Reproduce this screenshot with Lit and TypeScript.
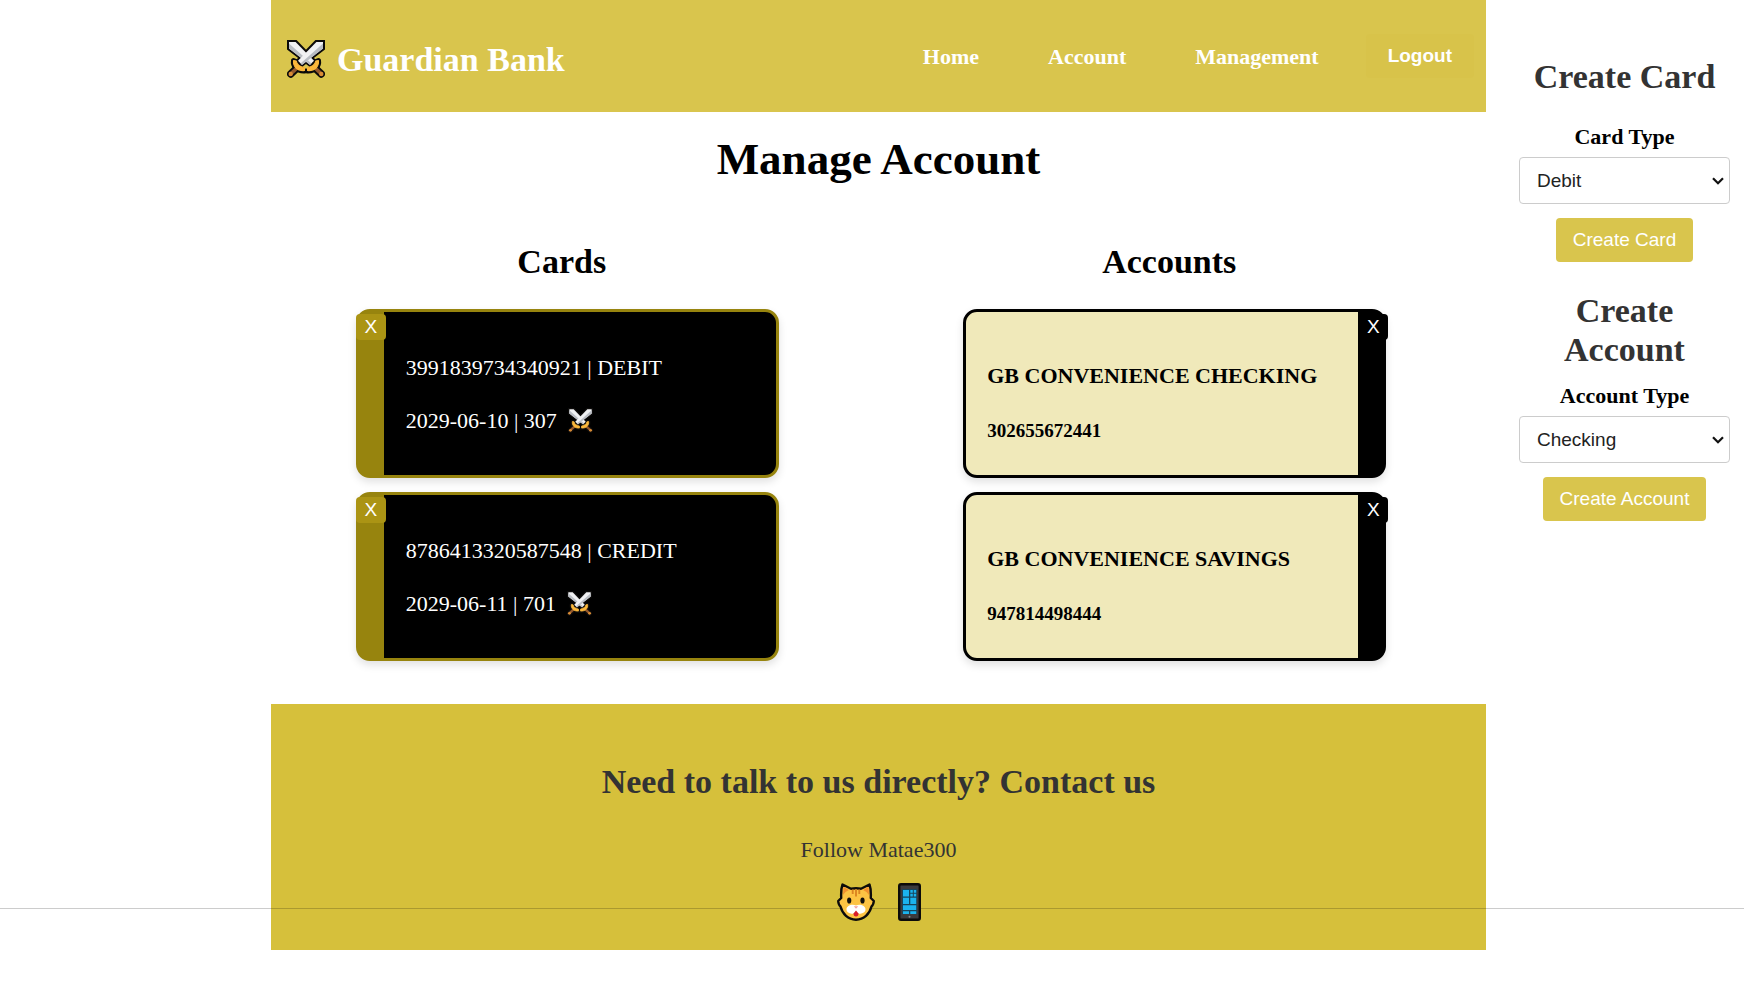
import { LitElement, html, css, svg } from "lit";
import { customElement, state } from "lit/decorators.js";

interface Card {
  number: string;
  type: string;
  expires: string;
  code: string;
}

interface Account {
  name: string;
  number: string;
}

const outline = svg`
  <path d="M1.400 1.400H9L27.500 20.500L22.800 25.200L1.400 8.800Z" fill="#0c0b0a" stroke="#0c0b0a" stroke-width="2.800" stroke-linejoin="miter"/>
  <path d="M28 28L34.300 34" stroke="#0c0b0a" stroke-width="7.400" stroke-linecap="round"/>
  <path d="M31.500 20.500C32.500 26 28 31.500 20.300 31C23 29 28 26 29 21.500Z" fill="#0c0b0a" stroke="#0c0b0a" stroke-width="5" stroke-linejoin="round"/>
`;

const blade = svg`
  <path d="M2 2H8.600L27 20.800L23 24.800L2 8.400Z" fill="#f0f1f3"/>
  <path d="M2 3.400L24.500 23.500L23 25L2 8.400Z" fill="#b9bdc3"/>
`;

const hilt = svg`
  <path d="M27.500 27.500L34 33.600" stroke="#94592c" stroke-width="3.600"/>
  <circle cx="34.300" cy="34" r="2.200" fill="#d98b35"/>
  <path d="M31.300 20.500C32.500 26 28 31 20.600 30.500V27.500C24.500 27 28 25 28.800 21Z" fill="#fbb83c" stroke="#fbb83c" stroke-width="1.200" stroke-linejoin="round"/>
`;

const mirrored = (part: unknown) => svg`
  <g transform="translate(38 0) scale(-1 1)">${part}</g>
  <g>${part}</g>
`;

const swords = (cls: string) => html`
  <svg class=${cls} viewBox="0 0 38 38" role="img" aria-label="Crossed swords">
    ${mirrored(outline)}
    <g>${blade}</g>
    <g transform="translate(38 0) scale(-1 1)">${blade}</g>
    ${mirrored(hilt)}
  </svg>
`;

const cat = html`
  <svg class="social-icon" viewBox="0 0 38 38" aria-hidden="true">
    <path d="M5.500 1.500L14 5.800Q19 4.800 24 5.800L32.500 1.500Q34.200 6 33.800 15L36.800 18Q36.500 22 34.500 23.500C32.500 31 27 36.700 19 36.700S5.500 31 3.500 23.500Q1.500 22 1.200 18L4.200 15Q3.800 6 5.500 1.500Z" fill="#fdc343" stroke="#0c0b0a" stroke-width="2.400" stroke-linejoin="round"/>
    <path d="M6.500 3.800L12 7Q8 8.500 6 12Z M31.500 3.800L26 7Q30 8.500 32 12Z" fill="#f2902f"/>
    <path d="M15.700 6.500V11 M19 6.300V13.500 M22.300 6.500V11" stroke="#dc8420" stroke-width="1.900" fill="none"/>
    <ellipse cx="12.200" cy="17.500" rx="2.100" ry="3.100" fill="#14100c"/>
    <ellipse cx="25.500" cy="17.500" rx="2.100" ry="3.100" fill="#14100c"/>
    <path d="M19 22.500C23 20.800 28.500 22.500 28.500 26.500C28.500 30 24 31 21.500 30.800H16.500C14 31 9.500 30 9.500 26.500C9.500 22.500 15 20.800 19 22.500Z" fill="#fff"/>
    <path d="M16.800 23.200H21.200L19 25.800Z" fill="#f3a0a0"/>
    <path d="M19 27.500L21.500 30.500Q21.500 33.500 19 33.500T16.500 30.500Z" fill="#d91e2b"/>
  </svg>
`;

const phone = html`
  <svg class="social-icon phone" viewBox="0 0 23 38" aria-hidden="true">
    <rect x="1.200" y="1.200" width="20.600" height="35.600" rx="1.800" fill="#3b3b3d" stroke="#0c0b0a" stroke-width="2.400"/>
    <rect x="4" y="6" width="15" height="25" fill="#17455c"/>
    <path d="M5 7H11V13.500H5Z M12.300 7H14.800V9.700H12.300Z M15.800 7H18.200V9.700H15.800Z M12.300 10.800H14.800V13.500H12.300Z M15.800 10.800H18.200V13.500H15.800Z M5 14.800H11V21H5Z M12.300 14.800H18.200V21H12.300Z M5 22.200H18.200V27H5Z M5 28.200H11V31H5Z M12.300 28.200H18.200V31H12.300Z" fill="#1bb3ee"/>
    <circle cx="11.500" cy="33.800" r="1" fill="#8a8a8c"/>
  </svg>
`;

const chevron = html`
  <svg class="chevron" viewBox="0 0 12 8" aria-hidden="true">
    <path d="M1 1.200L6 6.300L11 1.200" fill="none" stroke="#111" stroke-width="2.200"/>
  </svg>
`;

@customElement("app-root")
export class AppRoot extends LitElement {
  static styles = css`
    :host {
      display: block;
      position: relative;
      min-height: 100vh;
      background: #fff;
      color: #000;
      font-family: "Liberation Serif", "Times New Roman", serif;
      font-size: 22px;
      line-height: 25px;
    }
    h1, h2, h3, p, ul {
      margin: 0;
      padding: 0;
    }
    h1 {
      font-size: 45px;
      line-height: 52px;
    }
    h2 {
      font-size: 34px;
      line-height: 39px;
    }
    button, select {
      font-family: "Liberation Sans", Arial, sans-serif;
      font-size: 19px;
      line-height: 22px;
    }
    button {
      border: none;
      color: #fff;
      cursor: pointer;
    }
    .page {
      display: grid;
      grid-template-columns: minmax(0, 271px) minmax(0, 1fr) 258px;
      align-items: start;
    }
    .content {
      grid-column: 2;
    }
    .header {
      display: flex;
      align-items: center;
      justify-content: space-between;
      min-height: 112px;
      box-sizing: border-box;
      padding: 0 12px 0 16px;
      background: #d9c54d;
      color: #fff;
    }
    .brand {
      display: flex;
      align-items: center;
      gap: 12px;
      padding-top: 6px;
    }
    .brand-icon {
      width: 38px;
      height: 38px;
    }
    .nav {
      display: flex;
      align-items: center;
      gap: 25px;
    }
    .nav-link {
      padding: 0 22px;
      color: #fff;
      font-weight: bold;
      text-decoration: none;
    }
    .logout {
      padding: 11px 22px;
      border-radius: 4px;
      background: #d8c34a;
      font-weight: bold;
    }
    .title {
      margin: 21px 0 57px;
      text-align: center;
    }
    .columns {
      display: grid;
      grid-template-columns: 1fr 1fr;
    }
    .column {
      display: flex;
      flex-direction: column;
      gap: 28px;
      padding-right: 26px;
      text-align: center;
    }
    .list {
      display: flex;
      flex-direction: column;
      align-items: center;
      gap: 14px;
      padding-left: 11px;
      list-style: none;
      text-align: left;
    }
    .item {
      position: relative;
      display: flex;
      flex-direction: column;
      box-sizing: border-box;
      width: 100%;
      max-width: 423px;
      min-height: 169px;
      border: 3px solid;
      border-radius: 14px;
      box-shadow: 0 4px 8px rgba(0, 0, 0, 0.12);
    }
    .card {
      gap: 28px;
      padding: 43px 22px 42px;
      border-color: #97840e;
      border-left-width: 28px;
      background: #000;
      color: #fff;
    }
    .account {
      gap: 32px;
      padding: 51px 21px 32px;
      border-color: #000;
      border-right-width: 28px;
      background: #f0e9ba;
    }
    .account-name {
      font-size: 22px;
      line-height: 25px;
    }
    .account-number {
      font-size: 19px;
      line-height: 22px;
      font-weight: bold;
    }
    .close {
      position: absolute;
      top: 2px;
      width: 30px;
      padding: 2px 0;
      border-radius: 4px;
      text-align: center;
    }
    .card .close {
      left: -28px;
      background: #ab9414;
    }
    .account .close {
      right: -30px;
      background: #000;
    }
    .line {
      display: flex;
      align-items: center;
      gap: 11px;
    }
    .card-icon {
      width: 25px;
      height: 25px;
    }
    .footer {
      margin-top: 43px;
      padding: 58px 16px 29px;
      background: #d6c03b;
      color: #333;
      text-align: center;
    }
    .follow {
      margin-top: 36px;
    }
    .social {
      display: flex;
      justify-content: center;
      gap: 23px;
      margin-top: 21px;
    }
    .social-link {
      position: relative;
      z-index: 1;
      display: flex;
    }
    .social-icon {
      width: 38px;
      height: 38px;
    }
    .phone {
      width: 23px;
    }
    .sidebar {
      grid-column: 3;
      display: flex;
      flex-direction: column;
      gap: 29px;
      padding: 57px 14px 0 33px;
      text-align: center;
    }
    .form {
      display: flex;
      flex-direction: column;
      align-items: center;
    }
    .form-title {
      color: #333;
    }
    .label {
      margin: 28px 0 8px;
      font-weight: bold;
    }
    .label.near {
      margin-top: 14px;
    }
    .select-box {
      display: grid;
      align-items: center;
      width: 100%;
    }
    .select {
      grid-area: 1 / 1;
      appearance: none;
      width: 100%;
      height: 47px;
      padding: 0 17px;
      border: 1px solid #ccc;
      border-radius: 4px;
      background: #fff;
      color: #222;
    }
    .chevron {
      grid-area: 1 / 1;
      justify-self: end;
      width: 12px;
      height: 8px;
      margin-right: 6px;
      pointer-events: none;
    }
    .submit {
      margin-top: 14px;
      padding: 11px 17px;
      border-radius: 4px;
      background: #d9c54d;
    }
    .rule {
      position: absolute;
      top: 908px;
      left: 0;
      right: 0;
      height: 1px;
      background: rgba(0, 0, 0, 0.2);
    }
  `;

  @state() private cards: Card[] = [
    { number: "3991839734340921", type: "DEBIT", expires: "2029-06-10", code: "307" },
    { number: "8786413320587548", type: "CREDIT", expires: "2029-06-11", code: "701" },
  ];

  @state() private accounts: Account[] = [
    { name: "GB CONVENIENCE CHECKING", number: "302655672441" },
    { name: "GB CONVENIENCE SAVINGS", number: "947814498444" },
  ];

  render() {
    return html`
      <div class="page">
        <div class="content">
          <header class="header">
            <div class="brand">
              ${swords("brand-icon")}
              <h2>Guardian Bank</h2>
            </div>
            <nav class="nav">
              <a class="nav-link" href="#home">Home</a>
              <a class="nav-link" href="#account">Account</a>
              <a class="nav-link" href="#management">Management</a>
              <button class="logout" type="button">Logout</button>
            </nav>
          </header>
          <main>
            <h1 class="title">Manage Account</h1>
            <div class="columns">
              <section class="column">
                <h2>Cards</h2>
                <ul class="list">
                  ${this.cards.map(
                    (c) => html`
                      <li class="item card">
                        <button class="close" type="button">X</button>
                        <p>${c.number} | ${c.type}</p>
                        <p class="line"><span>${c.expires} | ${c.code}</span>${swords("card-icon")}</p>
                      </li>
                    `
                  )}
                </ul>
              </section>
              <section class="column">
                <h2>Accounts</h2>
                <ul class="list">
                  ${this.accounts.map(
                    (a) => html`
                      <li class="item account">
                        <button class="close" type="button">X</button>
                        <h3 class="account-name">${a.name}</h3>
                        <p class="account-number">${a.number}</p>
                      </li>
                    `
                  )}
                </ul>
              </section>
            </div>
          </main>
          <footer class="footer">
            <h2>Need to talk to us directly? Contact us</h2>
            <p class="follow">Follow Matae300</p>
            <div class="social">
              <a class="social-link" href="#github" aria-label="GitHub">${cat}</a>
              <a class="social-link" href="#phone" aria-label="Phone">${phone}</a>
            </div>
          </footer>
        </div>
        <aside class="sidebar">
          <form class="form">
            <h2 class="form-title">Create Card</h2>
            <label class="label" for="card-type">Card Type</label>
            <div class="select-box">
              <select class="select" id="card-type">
                <option>Debit</option>
                <option>Credit</option>
              </select>
              ${chevron}
            </div>
            <button class="submit" type="button">Create Card</button>
          </form>
          <form class="form">
            <h2 class="form-title">Create Account</h2>
            <label class="label near" for="account-type">Account Type</label>
            <div class="select-box">
              <select class="select" id="account-type">
                <option>Checking</option>
                <option>Savings</option>
              </select>
              ${chevron}
            </div>
            <button class="submit" type="button">Create Account</button>
          </form>
        </aside>
      </div>
      <div class="rule"></div>
    `;
  }
}
